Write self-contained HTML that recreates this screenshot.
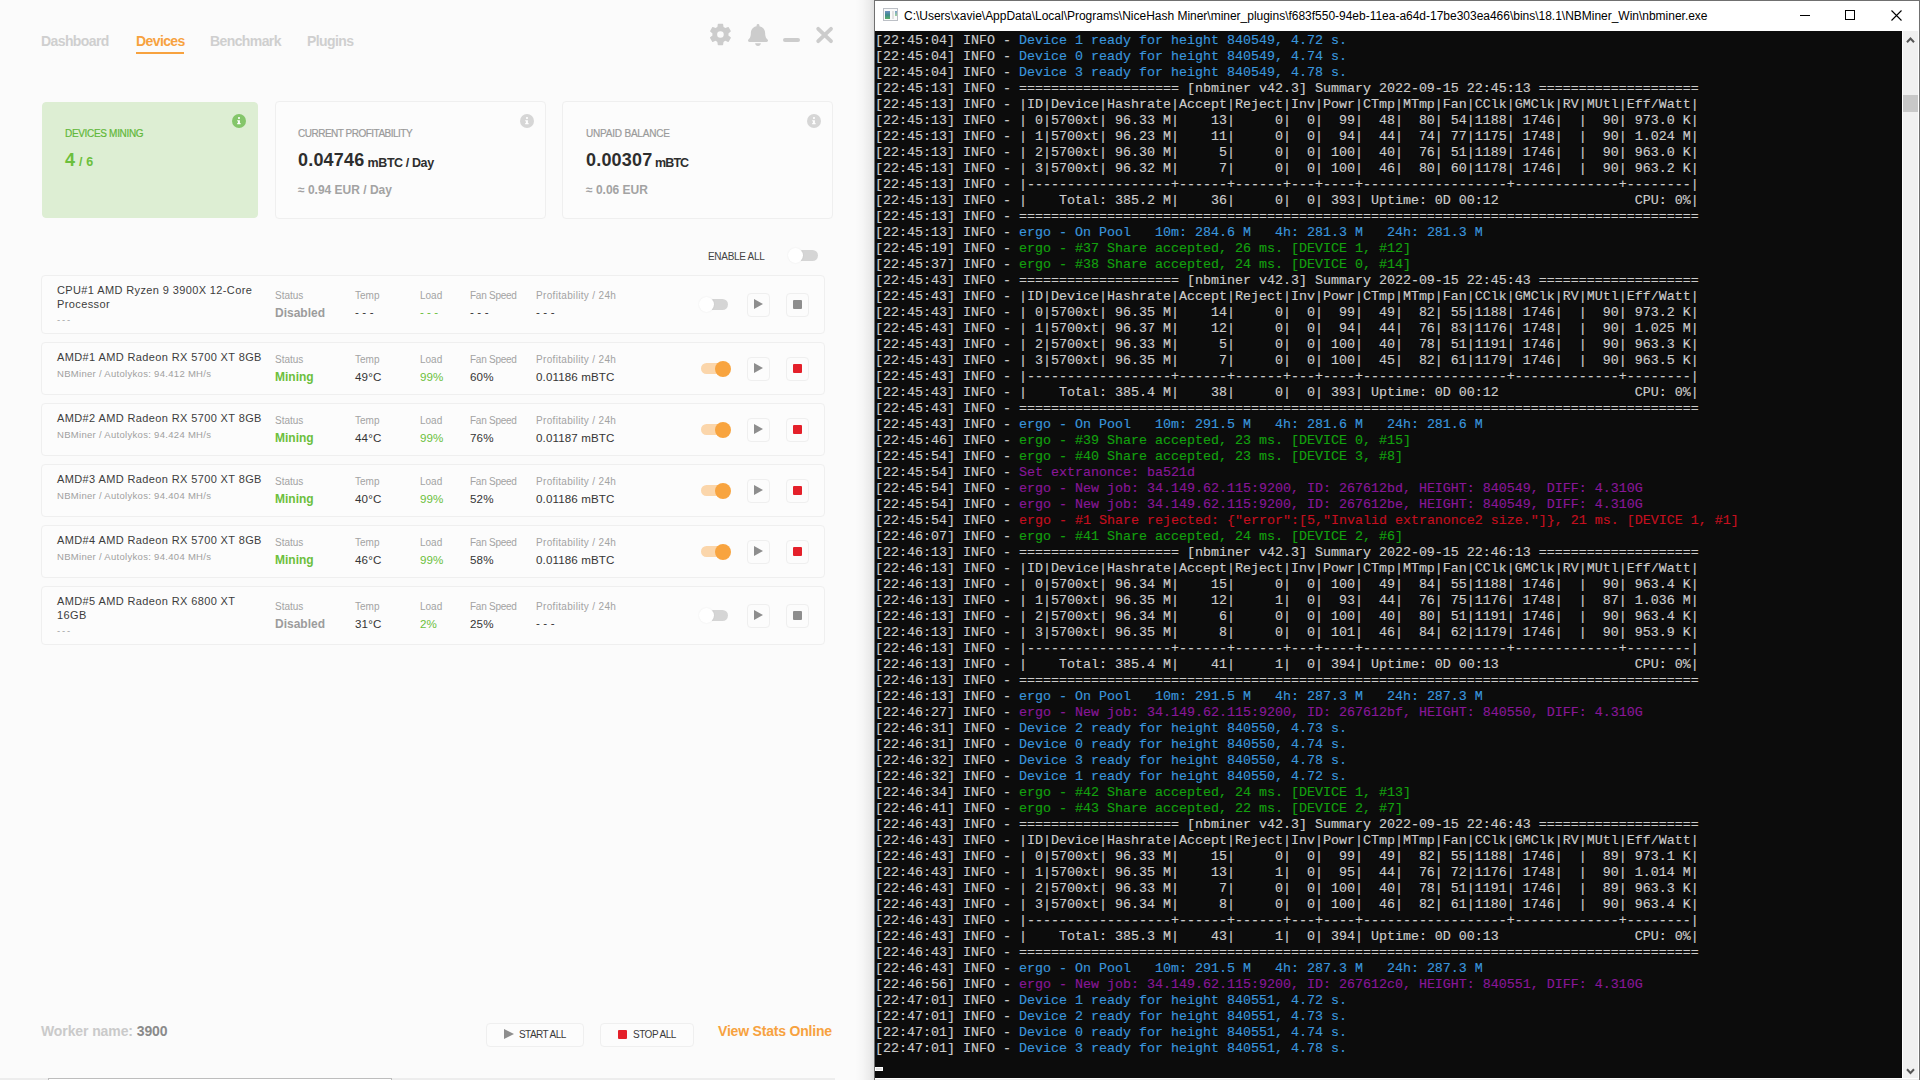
<!DOCTYPE html>
<html><head><meta charset="utf-8">
<style>
html,body{margin:0;padding:0}
body{width:1920px;height:1080px;overflow:hidden;position:relative;background:#fbfbfb;font-family:"Liberation Sans",sans-serif}
#app{position:absolute;left:0;top:0;width:874px;height:1080px;background:#fbfbfb;overflow:hidden}
#shadow{position:absolute;left:855px;top:0;width:19px;height:1080px;background:linear-gradient(to right,rgba(0,0,0,0) 0%,rgba(0,0,0,0.02) 40%,rgba(0,0,0,0.06) 75%,rgba(0,0,0,0.11) 100%)}
.t{position:absolute;line-height:0;white-space:nowrap;margin-top:-0.3467em}
.nav{font-size:14px;font-weight:bold;color:#cfcfcf;letter-spacing:-0.6px}
.nav.act{color:#f7a23f}
.card{position:absolute;box-sizing:border-box;border:1px solid #efefef;border-radius:4px;background:#fcfcfc}
.dn{font-size:11px;color:#3c3c3c;letter-spacing:0.38px}
.dsub{font-size:9.5px;color:#a0a0a0;letter-spacing:0.3px}
.lab{font-size:10px;color:#a3a3a3}
.v{font-size:11.6px;color:#353535;letter-spacing:0.12px}
.vg{font-size:11.6px;color:#6cbf3c}
.sm{font-size:12px;font-weight:bold;color:#6cbf3c}
.sd{font-size:12px;font-weight:bold;color:#9c9c9c}
.trk{position:absolute;width:22px;height:11px;border-radius:6px;background:#d5d5d5}
.trk.on{background:#fbd6ab;width:26px}
.knob{position:absolute;width:15px;height:15px;border-radius:50%;background:#fff;box-shadow:0 0 2px rgba(0,0,0,0.08)}
.knob.on{background:#f8a43f;width:16px;height:16px;box-shadow:none}
.btn{position:absolute;box-sizing:border-box;width:23px;height:24px;border:1px solid #efefef;border-radius:4px;background:#fcfcfc}
.tri{position:absolute;width:0;height:0;border-left:9px solid #8e8e8e;border-top:5px solid transparent;border-bottom:5px solid transparent}
.sq{position:absolute;width:9px;height:9px;background:#8e8e8e;border-radius:1px}
.sq.red{background:#e4202a}
.cap{font-size:10px;color:#9a9a9a;letter-spacing:-0.5px;-webkit-text-stroke:0.2px}
.big{font-size:18px;font-weight:bold;color:#2e2e2e;letter-spacing:0.2px}
.unit{font-size:12.5px;font-weight:bold;color:#2e2e2e;letter-spacing:-0.4px;position:relative;top:1px}
.eur{font-size:12px;font-weight:bold;color:#a3a3a3}
.info{position:absolute;width:14px;height:14px;border-radius:50%;background:#d9d9d9;color:#fff;font-size:10px;font-weight:bold;text-align:center;line-height:14px;font-family:"Liberation Serif",serif}
#con{position:absolute;left:874px;top:0;width:1046px;height:1080px;box-sizing:border-box;border:1px solid #707070;border-bottom:none;background:#fff}
#title{position:absolute;left:29px;top:0;font-size:12px;letter-spacing:-0.015px;color:#000;line-height:31px;white-space:nowrap}
#term{position:absolute;left:0;top:30px;width:1027px;height:1047px;background:#0c0c0c;overflow:hidden}
#txt{position:absolute;left:0px;top:2px;margin:0;-webkit-text-stroke:0.15px;font-family:"Liberation Mono",monospace;font-size:13.3333px;line-height:16px;color:#cccccc;white-space:pre}
#sb{position:absolute;left:1028px;top:30px;width:15px;height:1047px;background:#f0f0f0}
</style></head><body>
<div id="app">
  <div class="t nav" style="left:41px;top:46px">Dashboard</div>
  <div class="t nav act" style="left:136px;top:46px">Devices</div>
  <div style="position:absolute;left:136px;top:52px;width:48px;height:2px;background:#f7a23f"></div>
  <div class="t nav" style="left:210px;top:46px">Benchmark</div>
  <div class="t nav" style="left:307px;top:46px">Plugins</div>

  <!-- cards -->
  <div class="card" style="left:42px;top:102px;width:216px;height:116px;background:#ddeed3;border-color:#ddeed3"></div>
  <svg style="position:absolute;left:232.2px;top:113.9px" width="14" height="14"><circle cx="7" cy="7" r="7" fill="#84c66a"/><circle cx="7" cy="4.1" r="1.05" fill="#fff"/><path d="M5.2 6.3H7.9V9.1H8.6V10.3H5.2V9.1H5.9V7.3H5.2Z" fill="#fff"/></svg>
  <div class="t cap" style="left:65px;top:137px;color:#62b83a;letter-spacing:-0.32px">DEVICES MINING</div>
  <div class="t big" style="left:65px;top:166px;color:#6cbf3c">4<span style="font-size:12.5px"> / 6</span></div>

  <div class="card" style="left:275px;top:101px;width:271px;height:118px"></div>
  <svg style="position:absolute;left:519.8px;top:113.9px" width="14" height="14"><circle cx="7" cy="7" r="7" fill="#d6d6d6"/><circle cx="7" cy="4.1" r="1.05" fill="#fff"/><path d="M5.2 6.3H7.9V9.1H8.6V10.3H5.2V9.1H5.9V7.3H5.2Z" fill="#fff"/></svg>
  <div class="t cap" style="left:298px;top:137px">CURRENT PROFITABILITY</div>
  <div class="t big" style="left:298px;top:166px">0.04746<span class="unit"> mBTC / Day</span></div>
  <div class="t eur" style="left:298px;top:194px">≈ 0.94 EUR / Day</div>

  <div class="card" style="left:562px;top:101px;width:271px;height:118px"></div>
  <svg style="position:absolute;left:807.3px;top:113.9px" width="14" height="14"><circle cx="7" cy="7" r="7" fill="#d6d6d6"/><circle cx="7" cy="4.1" r="1.05" fill="#fff"/><path d="M5.2 6.3H7.9V9.1H8.6V10.3H5.2V9.1H5.9V7.3H5.2Z" fill="#fff"/></svg>
  <div class="t cap" style="left:586px;top:137px;letter-spacing:-0.2px">UNPAID BALANCE</div>
  <div class="t big" style="left:586px;top:166px">0.00307<span class="unit" style="letter-spacing:-0.9px"> mBTC</span></div>
  <div class="t eur" style="left:586px;top:194px">≈ 0.06 EUR</div>

  <div class="t" style="left:708px;top:260px;font-size:10px;color:#444;letter-spacing:-0.3px">ENABLE ALL</div>
  <div class="trk" style="left:796px;top:249.5px"></div><div class="knob" style="left:788px;top:247.5px"></div>

<div class="card" style="left:41px;top:275px;width:784px;height:59px"></div>
<div class="t dn" style="left:57px;top:294.0px;"><span>CPU#1 AMD Ryzen 9 3900X 12-Core</span></div>
<div class="t dn" style="left:57px;top:308.0px;"><span>Processor</span></div>
<div class="t dsub" style="left:57px;top:323.5px;letter-spacing:-0.4px"><span>- - -</span></div>
<div class="t lab" style="left:275px;top:299.5px;"><span>Status</span></div>
<div class="t sd" style="left:275px;top:317.5px;"><span>Disabled</span></div>
<div class="t lab" style="left:355px;top:299.5px;"><span>Temp</span></div>
<div class="t v" style="left:355px;top:316.5px;"><span>- - -</span></div>
<div class="t lab" style="left:420px;top:299.5px;"><span>Load</span></div>
<div class="t vg" style="left:420px;top:316.5px;"><span>- - -</span></div>
<div class="t lab" style="left:470px;top:299.5px;letter-spacing:-0.25px"><span>Fan Speed</span></div>
<div class="t v" style="left:470px;top:316.5px;"><span>- - -</span></div>
<div class="t lab" style="left:536px;top:299.5px;letter-spacing:0.33px"><span>Profitability / 24h</span></div>
<div class="t v" style="left:536px;top:316.5px;"><span>- - -</span></div>
<div class="trk" style="left:706px;top:299.0px"></div><div class="knob" style="left:699px;top:297.0px"></div>
<div class="btn" style="left:747px;top:293.0px"></div>
<div class="tri" style="left:754px;top:299.0px"></div>
<div class="btn" style="left:786px;top:293.0px"></div>
<div class="sq " style="left:793px;top:300.0px"></div>
<div class="card" style="left:41px;top:342px;width:784px;height:53px"></div>
<div class="t dn" style="left:57px;top:361.0px;"><span>AMD#1 AMD Radeon RX 5700 XT 8GB</span></div>
<div class="t dsub" style="left:57px;top:377.0px;"><span>NBMiner / Autolykos: 94.412 MH/s</span></div>
<div class="t lab" style="left:275px;top:363.5px;"><span>Status</span></div>
<div class="t sm" style="left:275px;top:381.5px;"><span>Mining</span></div>
<div class="t lab" style="left:355px;top:363.5px;"><span>Temp</span></div>
<div class="t v" style="left:355px;top:381.5px;"><span>49°C</span></div>
<div class="t lab" style="left:420px;top:363.5px;"><span>Load</span></div>
<div class="t vg" style="left:420px;top:381.5px;"><span>99%</span></div>
<div class="t lab" style="left:470px;top:363.5px;letter-spacing:-0.25px"><span>Fan Speed</span></div>
<div class="t v" style="left:470px;top:381.5px;"><span>60%</span></div>
<div class="t lab" style="left:536px;top:363.5px;letter-spacing:0.33px"><span>Profitability / 24h</span></div>
<div class="t v" style="left:536px;top:381.5px;"><span>0.01186 mBTC</span></div>
<div class="trk on" style="left:701px;top:363.0px"></div><div class="knob on" style="left:715px;top:360.5px"></div>
<div class="btn" style="left:747px;top:357.0px"></div>
<div class="tri" style="left:754px;top:363.0px"></div>
<div class="btn" style="left:786px;top:357.0px"></div>
<div class="sq red" style="left:793px;top:364.0px"></div>
<div class="card" style="left:41px;top:403px;width:784px;height:53px"></div>
<div class="t dn" style="left:57px;top:422.0px;"><span>AMD#2 AMD Radeon RX 5700 XT 8GB</span></div>
<div class="t dsub" style="left:57px;top:438.0px;"><span>NBMiner / Autolykos: 94.424 MH/s</span></div>
<div class="t lab" style="left:275px;top:424.5px;"><span>Status</span></div>
<div class="t sm" style="left:275px;top:442.5px;"><span>Mining</span></div>
<div class="t lab" style="left:355px;top:424.5px;"><span>Temp</span></div>
<div class="t v" style="left:355px;top:442.5px;"><span>44°C</span></div>
<div class="t lab" style="left:420px;top:424.5px;"><span>Load</span></div>
<div class="t vg" style="left:420px;top:442.5px;"><span>99%</span></div>
<div class="t lab" style="left:470px;top:424.5px;letter-spacing:-0.25px"><span>Fan Speed</span></div>
<div class="t v" style="left:470px;top:442.5px;"><span>76%</span></div>
<div class="t lab" style="left:536px;top:424.5px;letter-spacing:0.33px"><span>Profitability / 24h</span></div>
<div class="t v" style="left:536px;top:442.5px;"><span>0.01187 mBTC</span></div>
<div class="trk on" style="left:701px;top:424.0px"></div><div class="knob on" style="left:715px;top:421.5px"></div>
<div class="btn" style="left:747px;top:418.0px"></div>
<div class="tri" style="left:754px;top:424.0px"></div>
<div class="btn" style="left:786px;top:418.0px"></div>
<div class="sq red" style="left:793px;top:425.0px"></div>
<div class="card" style="left:41px;top:464px;width:784px;height:53px"></div>
<div class="t dn" style="left:57px;top:483.0px;"><span>AMD#3 AMD Radeon RX 5700 XT 8GB</span></div>
<div class="t dsub" style="left:57px;top:499.0px;"><span>NBMiner / Autolykos: 94.404 MH/s</span></div>
<div class="t lab" style="left:275px;top:485.5px;"><span>Status</span></div>
<div class="t sm" style="left:275px;top:503.5px;"><span>Mining</span></div>
<div class="t lab" style="left:355px;top:485.5px;"><span>Temp</span></div>
<div class="t v" style="left:355px;top:503.5px;"><span>40°C</span></div>
<div class="t lab" style="left:420px;top:485.5px;"><span>Load</span></div>
<div class="t vg" style="left:420px;top:503.5px;"><span>99%</span></div>
<div class="t lab" style="left:470px;top:485.5px;letter-spacing:-0.25px"><span>Fan Speed</span></div>
<div class="t v" style="left:470px;top:503.5px;"><span>52%</span></div>
<div class="t lab" style="left:536px;top:485.5px;letter-spacing:0.33px"><span>Profitability / 24h</span></div>
<div class="t v" style="left:536px;top:503.5px;"><span>0.01186 mBTC</span></div>
<div class="trk on" style="left:701px;top:485.0px"></div><div class="knob on" style="left:715px;top:482.5px"></div>
<div class="btn" style="left:747px;top:479.0px"></div>
<div class="tri" style="left:754px;top:485.0px"></div>
<div class="btn" style="left:786px;top:479.0px"></div>
<div class="sq red" style="left:793px;top:486.0px"></div>
<div class="card" style="left:41px;top:525px;width:784px;height:53px"></div>
<div class="t dn" style="left:57px;top:544.0px;"><span>AMD#4 AMD Radeon RX 5700 XT 8GB</span></div>
<div class="t dsub" style="left:57px;top:560.0px;"><span>NBMiner / Autolykos: 94.404 MH/s</span></div>
<div class="t lab" style="left:275px;top:546.5px;"><span>Status</span></div>
<div class="t sm" style="left:275px;top:564.5px;"><span>Mining</span></div>
<div class="t lab" style="left:355px;top:546.5px;"><span>Temp</span></div>
<div class="t v" style="left:355px;top:564.5px;"><span>46°C</span></div>
<div class="t lab" style="left:420px;top:546.5px;"><span>Load</span></div>
<div class="t vg" style="left:420px;top:564.5px;"><span>99%</span></div>
<div class="t lab" style="left:470px;top:546.5px;letter-spacing:-0.25px"><span>Fan Speed</span></div>
<div class="t v" style="left:470px;top:564.5px;"><span>58%</span></div>
<div class="t lab" style="left:536px;top:546.5px;letter-spacing:0.33px"><span>Profitability / 24h</span></div>
<div class="t v" style="left:536px;top:564.5px;"><span>0.01186 mBTC</span></div>
<div class="trk on" style="left:701px;top:546.0px"></div><div class="knob on" style="left:715px;top:543.5px"></div>
<div class="btn" style="left:747px;top:540.0px"></div>
<div class="tri" style="left:754px;top:546.0px"></div>
<div class="btn" style="left:786px;top:540.0px"></div>
<div class="sq red" style="left:793px;top:547.0px"></div>
<div class="card" style="left:41px;top:586px;width:784px;height:59px"></div>
<div class="t dn" style="left:57px;top:605.0px;"><span>AMD#5 AMD Radeon RX 6800 XT</span></div>
<div class="t dn" style="left:57px;top:619.0px;"><span>16GB</span></div>
<div class="t dsub" style="left:57px;top:634.5px;letter-spacing:-0.4px"><span>- - -</span></div>
<div class="t lab" style="left:275px;top:610.5px;"><span>Status</span></div>
<div class="t sd" style="left:275px;top:628.5px;"><span>Disabled</span></div>
<div class="t lab" style="left:355px;top:610.5px;"><span>Temp</span></div>
<div class="t v" style="left:355px;top:628.5px;"><span>31°C</span></div>
<div class="t lab" style="left:420px;top:610.5px;"><span>Load</span></div>
<div class="t vg" style="left:420px;top:628.5px;"><span>2%</span></div>
<div class="t lab" style="left:470px;top:610.5px;letter-spacing:-0.25px"><span>Fan Speed</span></div>
<div class="t v" style="left:470px;top:628.5px;"><span>25%</span></div>
<div class="t lab" style="left:536px;top:610.5px;letter-spacing:0.33px"><span>Profitability / 24h</span></div>
<div class="t v" style="left:536px;top:627.5px;"><span>- - -</span></div>
<div class="trk" style="left:706px;top:610.0px"></div><div class="knob" style="left:699px;top:608.0px"></div>
<div class="btn" style="left:747px;top:604.0px"></div>
<div class="tri" style="left:754px;top:610.0px"></div>
<div class="btn" style="left:786px;top:604.0px"></div>
<div class="sq " style="left:793px;top:611.0px"></div>

  <div class="t" style="left:41px;top:1036px;font-size:14px;font-weight:bold;color:#cacaca;letter-spacing:-0.1px">Worker name: <span style="color:#8a8a8a">3900</span></div>
  <div class="btn" style="left:486px;top:1023px;width:98px;height:24px"></div>
  <div class="tri" style="left:503.5px;top:1029px;border-left-width:10px;border-top-width:5px;border-bottom-width:5px"></div>
  <div class="t" style="left:519px;top:1038.5px;font-size:10px;color:#3a3a3a;letter-spacing:-0.55px">START ALL</div>
  <div class="btn" style="left:600px;top:1023px;width:94px;height:24px"></div>
  <div class="sq red" style="left:618px;top:1030px;width:9px;height:9px"></div>
  <div class="t" style="left:633px;top:1038.5px;font-size:10px;color:#3a3a3a;letter-spacing:-0.5px">STOP ALL</div>
  <div class="t" style="left:718px;top:1036px;font-size:14px;font-weight:bold;color:#f7a23f;letter-spacing:-0.2px">View Stats Online</div>

  <svg style="position:absolute;left:706.9px;top:21.4px" width="26.9" height="26.9" viewBox="0 0 24 24"><path fill="#cccccc" d="M19.14,12.94c0.04-0.3,0.06-0.61,0.06-0.94c0-0.32-0.02-0.64-0.07-0.94l2.03-1.58c0.18-0.14,0.23-0.41,0.12-0.61l-1.92-3.32c-0.12-0.22-0.37-0.29-0.59-0.22l-2.39,0.96c-0.5-0.38-1.03-0.7-1.62-0.94L14.4,2.81c-0.04-0.24-0.24-0.41-0.48-0.41h-3.84c-0.24,0-0.43,0.17-0.47,0.41L9.25,5.35C8.66,5.59,8.12,5.92,7.63,6.29L5.24,5.33c-0.22-0.08-0.47,0-0.59,0.22L2.74,8.87C2.62,9.08,2.66,9.34,2.86,9.48l2.03,1.58C4.84,11.36,4.8,11.69,4.8,12s0.02,0.64,0.07,0.94l-2.03,1.58c-0.18,0.14-0.23,0.41-0.12,0.61l1.92,3.320c0.12,0.22,0.37,0.29,0.59,0.22l2.39-0.96c0.5,0.38,1.03,0.7,1.62,0.94l0.36,2.54c0.05,0.24,0.24,0.41,0.48,0.41h3.84c0.24,0,0.44-0.17,0.47-0.41l0.36-2.54c0.59-0.24,1.13-0.56,1.62-0.94l2.39,0.96c0.22,0.08,0.47,0,0.59-0.22l1.92-3.32c0.12-0.22,0.07-0.47-0.12-0.61L19.14,12.94z M12,14.95a2.95,2.95 0 1,1 0,-5.9a2.95,2.95 0 1,1 0,5.9z" fill-rule="evenodd"/></svg>
  <svg style="position:absolute;left:748px;top:24px" width="20" height="22" viewBox="0 0 448 512" preserveAspectRatio="none"><path fill="#cccccc" d="M224 512c35.32 0 63.97-28.65 63.97-64H160.03c0 35.35 28.65 64 63.970 64zm215.39-149.71c-19.32-20.760-55.47-51.99-55.47-154.29 0-77.7-54.48-139.9-127.94-155.16V32c0-17.67-14.32-32-31.98-32s-31.98 14.33-31.98 32v20.84C118.56 68.1 64.08 130.3 64.08 208c0 102.3-36.15 133.53-55.47 154.29-6 6.45-8.66 14.16-8.610 21.71.11 16.4 12.98 32 32.1 32h383.8c19.12 0 32-15.6 32.1-32 .05-7.55-2.61-15.27-8.61-21.71z"/></svg>
  <div style="position:absolute;left:783.2px;top:37.9px;width:16.6px;height:4px;border-radius:2px;background:#cccccc"></div>
  <svg style="position:absolute;left:810px;top:20px" width="30" height="30"><path d="M8.2 8.8L21 21.2M21 8.8L8.2 21.2" stroke="#cccccc" stroke-width="3.8" stroke-linecap="round"/></svg>
  <div style="position:absolute;left:0;top:1078px;width:835px;height:2px;background:#ededed"></div>
  <div style="position:absolute;left:48px;top:1078px;width:344px;height:2px;box-sizing:border-box;border:1px solid #bdbdbd;border-bottom:none;background:#fff"></div>
  <div id="shadow"></div>
</div>

<div id="con">
  <div style="position:absolute;left:8px;top:7px;width:15px;height:13px;border:1px solid #bcc0c6;background:#fafafa;box-sizing:border-box"></div>
  <div style="position:absolute;left:10px;top:10px;width:5px;height:8px;background:linear-gradient(#6d8fc2,#3f8a8c 50%,#5aae68)"></div>
  <div style="position:absolute;left:17px;top:10px;width:2px;height:8px;background:#e2e2e2"></div>
  <div style="position:absolute;left:20px;top:10px;width:2px;height:5px;background:linear-gradient(#7a9fcc,#9fd49a)"></div>
  <div id="title">C:\Users\xavie\AppData\Local\Programs\NiceHash Miner\miner_plugins\f683f550-94eb-11ea-a64d-17be303ea466\bins\18.1\NBMiner_Win\nbminer.exe</div>
  <div style="position:absolute;left:925px;top:14px;width:10px;height:1px;background:#000"></div>
  <div style="position:absolute;left:970px;top:9px;width:10px;height:10px;border:1px solid #000;box-sizing:border-box"></div>
  <svg style="position:absolute;left:1016px;top:9px" width="11" height="11"><path d="M0.5 0.5L10.5 10.5M10.5 0.5L0.5 10.5" stroke="#000" stroke-width="1.1"/></svg>
  <div id="term"><pre id="txt">[22:45:04] INFO - <span style="color:#3A96DD">Device 1 ready for height 840549, 4.72 s.</span>
[22:45:04] INFO - <span style="color:#3A96DD">Device 0 ready for height 840549, 4.74 s.</span>
[22:45:04] INFO - <span style="color:#3A96DD">Device 3 ready for height 840549, 4.78 s.</span>
[22:45:13] INFO - ==================== [nbminer v42.3] Summary 2022-09-15 22:45:13 ====================
[22:45:13] INFO - |ID|Device|Hashrate|Accept|Reject|Inv|Powr|CTmp|MTmp|Fan|CClk|GMClk|RV|MUtl|Eff/Watt|
[22:45:13] INFO - | 0|5700xt| 96.33 M|    13|     0|  0|  99|  48|  80| 54|1188| 1746|  |  90| 973.0 K|
[22:45:13] INFO - | 1|5700xt| 96.23 M|    11|     0|  0|  94|  44|  74| 77|1175| 1748|  |  90| 1.024 M|
[22:45:13] INFO - | 2|5700xt| 96.30 M|     5|     0|  0| 100|  40|  76| 51|1189| 1746|  |  90| 963.0 K|
[22:45:13] INFO - | 3|5700xt| 96.32 M|     7|     0|  0| 100|  46|  80| 60|1178| 1746|  |  90| 963.2 K|
[22:45:13] INFO - |------------------+------+------+---+----+------------------+-------------+--------|
[22:45:13] INFO - |    Total: 385.2 M|    36|     0|  0| 393| Uptime: 0D 00:12                 CPU: 0%|
[22:45:13] INFO - =====================================================================================
[22:45:13] INFO - <span style="color:#3A96DD">ergo - On Pool   10m: 284.6 M   4h: 281.3 M   24h: 281.3 M</span>
[22:45:19] INFO - <span style="color:#13A10E">ergo - #37 Share accepted, 26 ms. [DEVICE 1, #12]</span>
[22:45:37] INFO - <span style="color:#13A10E">ergo - #38 Share accepted, 24 ms. [DEVICE 0, #14]</span>
[22:45:43] INFO - ==================== [nbminer v42.3] Summary 2022-09-15 22:45:43 ====================
[22:45:43] INFO - |ID|Device|Hashrate|Accept|Reject|Inv|Powr|CTmp|MTmp|Fan|CClk|GMClk|RV|MUtl|Eff/Watt|
[22:45:43] INFO - | 0|5700xt| 96.35 M|    14|     0|  0|  99|  49|  82| 55|1188| 1746|  |  90| 973.2 K|
[22:45:43] INFO - | 1|5700xt| 96.37 M|    12|     0|  0|  94|  44|  76| 83|1176| 1748|  |  90| 1.025 M|
[22:45:43] INFO - | 2|5700xt| 96.33 M|     5|     0|  0| 100|  40|  78| 51|1191| 1746|  |  90| 963.3 K|
[22:45:43] INFO - | 3|5700xt| 96.35 M|     7|     0|  0| 100|  45|  82| 61|1179| 1746|  |  90| 963.5 K|
[22:45:43] INFO - |------------------+------+------+---+----+------------------+-------------+--------|
[22:45:43] INFO - |    Total: 385.4 M|    38|     0|  0| 393| Uptime: 0D 00:12                 CPU: 0%|
[22:45:43] INFO - =====================================================================================
[22:45:43] INFO - <span style="color:#3A96DD">ergo - On Pool   10m: 291.5 M   4h: 281.6 M   24h: 281.6 M</span>
[22:45:46] INFO - <span style="color:#13A10E">ergo - #39 Share accepted, 23 ms. [DEVICE 0, #15]</span>
[22:45:54] INFO - <span style="color:#13A10E">ergo - #40 Share accepted, 23 ms. [DEVICE 3, #8]</span>
[22:45:54] INFO - <span style="color:#881798">Set extranonce: ba521d</span>
[22:45:54] INFO - <span style="color:#881798">ergo - New job: 34.149.62.115:9200, ID: 267612bd, HEIGHT: 840549, DIFF: 4.310G</span>
[22:45:54] INFO - <span style="color:#881798">ergo - New job: 34.149.62.115:9200, ID: 267612be, HEIGHT: 840549, DIFF: 4.310G</span>
[22:45:54] INFO - <span style="color:#C50F1F">ergo - #1 Share rejected: {&quot;error&quot;:[5,&quot;Invalid extranonce2 size.&quot;]}, 21 ms. [DEVICE 1, #1]</span>
[22:46:07] INFO - <span style="color:#13A10E">ergo - #41 Share accepted, 24 ms. [DEVICE 2, #6]</span>
[22:46:13] INFO - ==================== [nbminer v42.3] Summary 2022-09-15 22:46:13 ====================
[22:46:13] INFO - |ID|Device|Hashrate|Accept|Reject|Inv|Powr|CTmp|MTmp|Fan|CClk|GMClk|RV|MUtl|Eff/Watt|
[22:46:13] INFO - | 0|5700xt| 96.34 M|    15|     0|  0| 100|  49|  84| 55|1188| 1746|  |  90| 963.4 K|
[22:46:13] INFO - | 1|5700xt| 96.35 M|    12|     1|  0|  93|  44|  76| 75|1176| 1748|  |  87| 1.036 M|
[22:46:13] INFO - | 2|5700xt| 96.34 M|     6|     0|  0| 100|  40|  80| 51|1191| 1746|  |  90| 963.4 K|
[22:46:13] INFO - | 3|5700xt| 96.35 M|     8|     0|  0| 101|  46|  84| 62|1179| 1746|  |  90| 953.9 K|
[22:46:13] INFO - |------------------+------+------+---+----+------------------+-------------+--------|
[22:46:13] INFO - |    Total: 385.4 M|    41|     1|  0| 394| Uptime: 0D 00:13                 CPU: 0%|
[22:46:13] INFO - =====================================================================================
[22:46:13] INFO - <span style="color:#3A96DD">ergo - On Pool   10m: 291.5 M   4h: 287.3 M   24h: 287.3 M</span>
[22:46:27] INFO - <span style="color:#881798">ergo - New job: 34.149.62.115:9200, ID: 267612bf, HEIGHT: 840550, DIFF: 4.310G</span>
[22:46:31] INFO - <span style="color:#3A96DD">Device 2 ready for height 840550, 4.73 s.</span>
[22:46:31] INFO - <span style="color:#3A96DD">Device 0 ready for height 840550, 4.74 s.</span>
[22:46:32] INFO - <span style="color:#3A96DD">Device 3 ready for height 840550, 4.78 s.</span>
[22:46:32] INFO - <span style="color:#3A96DD">Device 1 ready for height 840550, 4.72 s.</span>
[22:46:34] INFO - <span style="color:#13A10E">ergo - #42 Share accepted, 24 ms. [DEVICE 1, #13]</span>
[22:46:41] INFO - <span style="color:#13A10E">ergo - #43 Share accepted, 22 ms. [DEVICE 2, #7]</span>
[22:46:43] INFO - ==================== [nbminer v42.3] Summary 2022-09-15 22:46:43 ====================
[22:46:43] INFO - |ID|Device|Hashrate|Accept|Reject|Inv|Powr|CTmp|MTmp|Fan|CClk|GMClk|RV|MUtl|Eff/Watt|
[22:46:43] INFO - | 0|5700xt| 96.33 M|    15|     0|  0|  99|  49|  82| 55|1188| 1746|  |  89| 973.1 K|
[22:46:43] INFO - | 1|5700xt| 96.35 M|    13|     1|  0|  95|  44|  76| 72|1176| 1748|  |  90| 1.014 M|
[22:46:43] INFO - | 2|5700xt| 96.33 M|     7|     0|  0| 100|  40|  78| 51|1191| 1746|  |  89| 963.3 K|
[22:46:43] INFO - | 3|5700xt| 96.34 M|     8|     0|  0| 100|  46|  82| 61|1180| 1746|  |  90| 963.4 K|
[22:46:43] INFO - |------------------+------+------+---+----+------------------+-------------+--------|
[22:46:43] INFO - |    Total: 385.3 M|    43|     1|  0| 394| Uptime: 0D 00:13                 CPU: 0%|
[22:46:43] INFO - =====================================================================================
[22:46:43] INFO - <span style="color:#3A96DD">ergo - On Pool   10m: 291.5 M   4h: 287.3 M   24h: 287.3 M</span>
[22:46:56] INFO - <span style="color:#881798">ergo - New job: 34.149.62.115:9200, ID: 267612c0, HEIGHT: 840551, DIFF: 4.310G</span>
[22:47:01] INFO - <span style="color:#3A96DD">Device 1 ready for height 840551, 4.72 s.</span>
[22:47:01] INFO - <span style="color:#3A96DD">Device 2 ready for height 840551, 4.73 s.</span>
[22:47:01] INFO - <span style="color:#3A96DD">Device 0 ready for height 840551, 4.74 s.</span>
[22:47:01] INFO - <span style="color:#3A96DD">Device 3 ready for height 840551, 4.78 s.</span></pre>
  <div style="position:absolute;left:0px;top:1036px;width:8px;height:4px;box-sizing:border-box;border:1px solid #fff;background:#e6e6e6"></div></div>
  <div style="position:absolute;left:0;top:1077px;width:1027px;height:1px;background:#fff"></div><div style="position:absolute;left:0;top:1078px;width:1044px;height:1px;background:#eee"></div>
  <div id="sb">
    <svg style="position:absolute;left:3px;top:6px" width="9" height="7"><path d="M1 5.2L4.5 1.5L8 5.2" stroke="#555" stroke-width="2" fill="none"/></svg>
    <div style="position:absolute;left:0;top:64px;width:15px;height:17px;background:#c8c8c8"></div>
    <svg style="position:absolute;left:3px;top:1037px" width="9" height="7"><path d="M1 1.3L4.5 5L8 1.3" stroke="#555" stroke-width="2" fill="none"/></svg>
  </div>
</div>
</body></html>
